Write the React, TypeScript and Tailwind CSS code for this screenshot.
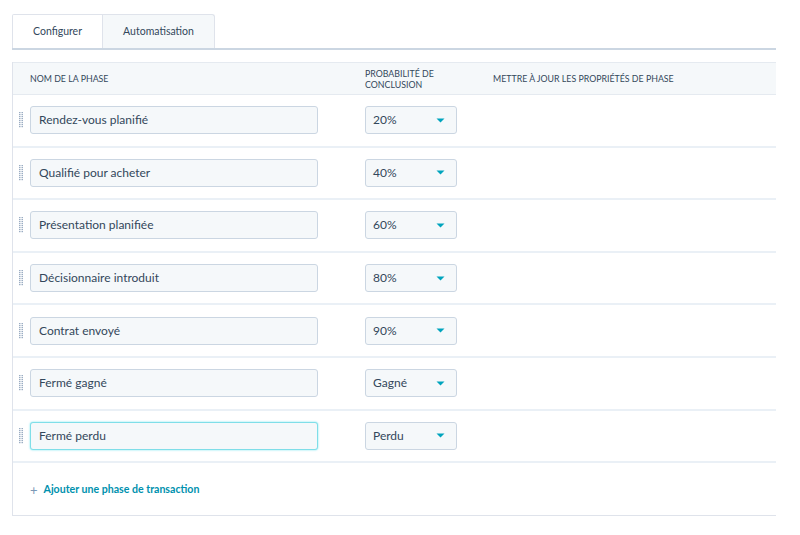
import React from "react";

const rows = [
  { name: "Rendez-vous planifié", prob: "20%" },
  { name: "Qualifié pour acheter", prob: "40%" },
  { name: "Présentation planifiée", prob: "60%" },
  { name: "Décisionnaire introduit", prob: "80%" },
  { name: "Contrat envoyé", prob: "90%" },
  { name: "Fermé gagné", prob: "Gagné" },
  { name: "Fermé perdu", prob: "Perdu", focus: true },
];

function Handle() {
  const dots = [];
  for (let r = 0; r < 8; r++) {
    for (let c = 0; c < 2; c++) {
      dots.push(<rect key={`${r}-${c}`} x={c * 2.5} y={r * 2} width="1.5" height="1.2" fill="#99acc2" />);
    }
  }
  return (
    <svg width="5" height="16" viewBox="0 0 5 16" className="shrink-0">
      {dots}
    </svg>
  );
}

function Caret() {
  return (
    <svg width="9" height="5" viewBox="0 0 9 5">
      <path d="M0.5 0.5 L8.5 0.5 L4.5 4.5 Z" fill="#00a4bd" />
    </svg>
  );
}

export default function App() {
  return (
    <div
      className="w-[800px] h-[535px] bg-white text-[#33475b]"
      style={{ fontFamily: "Lato, 'Open Sans', Arial, sans-serif" }}
    >
      <div className="pl-[12px] pr-[24px] pt-[14px]">
        <div className="flex border-b-2 border-[#cbd6e2] h-[36px]">
          <div className="w-[91px] bg-white border border-b-0 border-[#dfe3eb] flex items-center justify-center text-[10.5px] rounded-tl-[2px]">
            Configurer
          </div>
          <div className="w-[112px] bg-[#f5f8fa] border border-l-0 border-b-0 border-[#dfe3eb] flex items-center justify-center text-[10.5px] rounded-tr-[3px]">
            Automatisation
          </div>
        </div>

        <div className="mt-[12px] border-l border-b border-[#dfe3eb]">
          <div className="h-[33px] bg-[#f5f8fa] border-t border-b border-[#e5eaf0] flex items-center text-[8.8px] uppercase leading-[11px] text-[#33475b]">
            <div className="w-[352px] pl-[17px]">Nom de la phase</div>
            <div className="w-[128px]">
              Probabilité de
              <br />
              conclusion
            </div>
            <div>Mettre à jour les propriétés de phase</div>
          </div>
          {rows.map((r, i) => (
            <div key={i} className="h-[52.6px] border-b-2 border-[#eaf0f6] flex items-center">
              <div className="w-[17px] flex justify-center">
                <Handle />
              </div>
              <div
                className={`w-[288px] h-[28px] flex items-center pl-[8px] text-[12px] bg-[#f5f8fa] rounded-[3px] border ${
                  r.focus ? "border-[#7fdee8] shadow-[0_0_2px_rgba(0,208,228,0.6)]" : "border-[#cbd6e2]"
                }`}
              >
                {r.name}
              </div>
              <div className="ml-[47px] w-[92px] h-[28px] flex items-center justify-between pl-[7px] pr-[11px] text-[12px] bg-[#f5f8fa] rounded-[3px] border border-[#cbd6e2]">
                <span>{r.prob}</span>
                <Caret />
              </div>
            </div>
          ))}
          <div className="h-[52px] flex items-center pl-[17px] pt-[2px]">
            <span className="text-[13px] text-[#7c98b6] mr-[6px] leading-none">+</span>
            <span className="text-[10.6px] font-bold text-[#0091ae]">Ajouter une phase de transaction</span>
          </div>
        </div>
      </div>
    </div>
  );
}
